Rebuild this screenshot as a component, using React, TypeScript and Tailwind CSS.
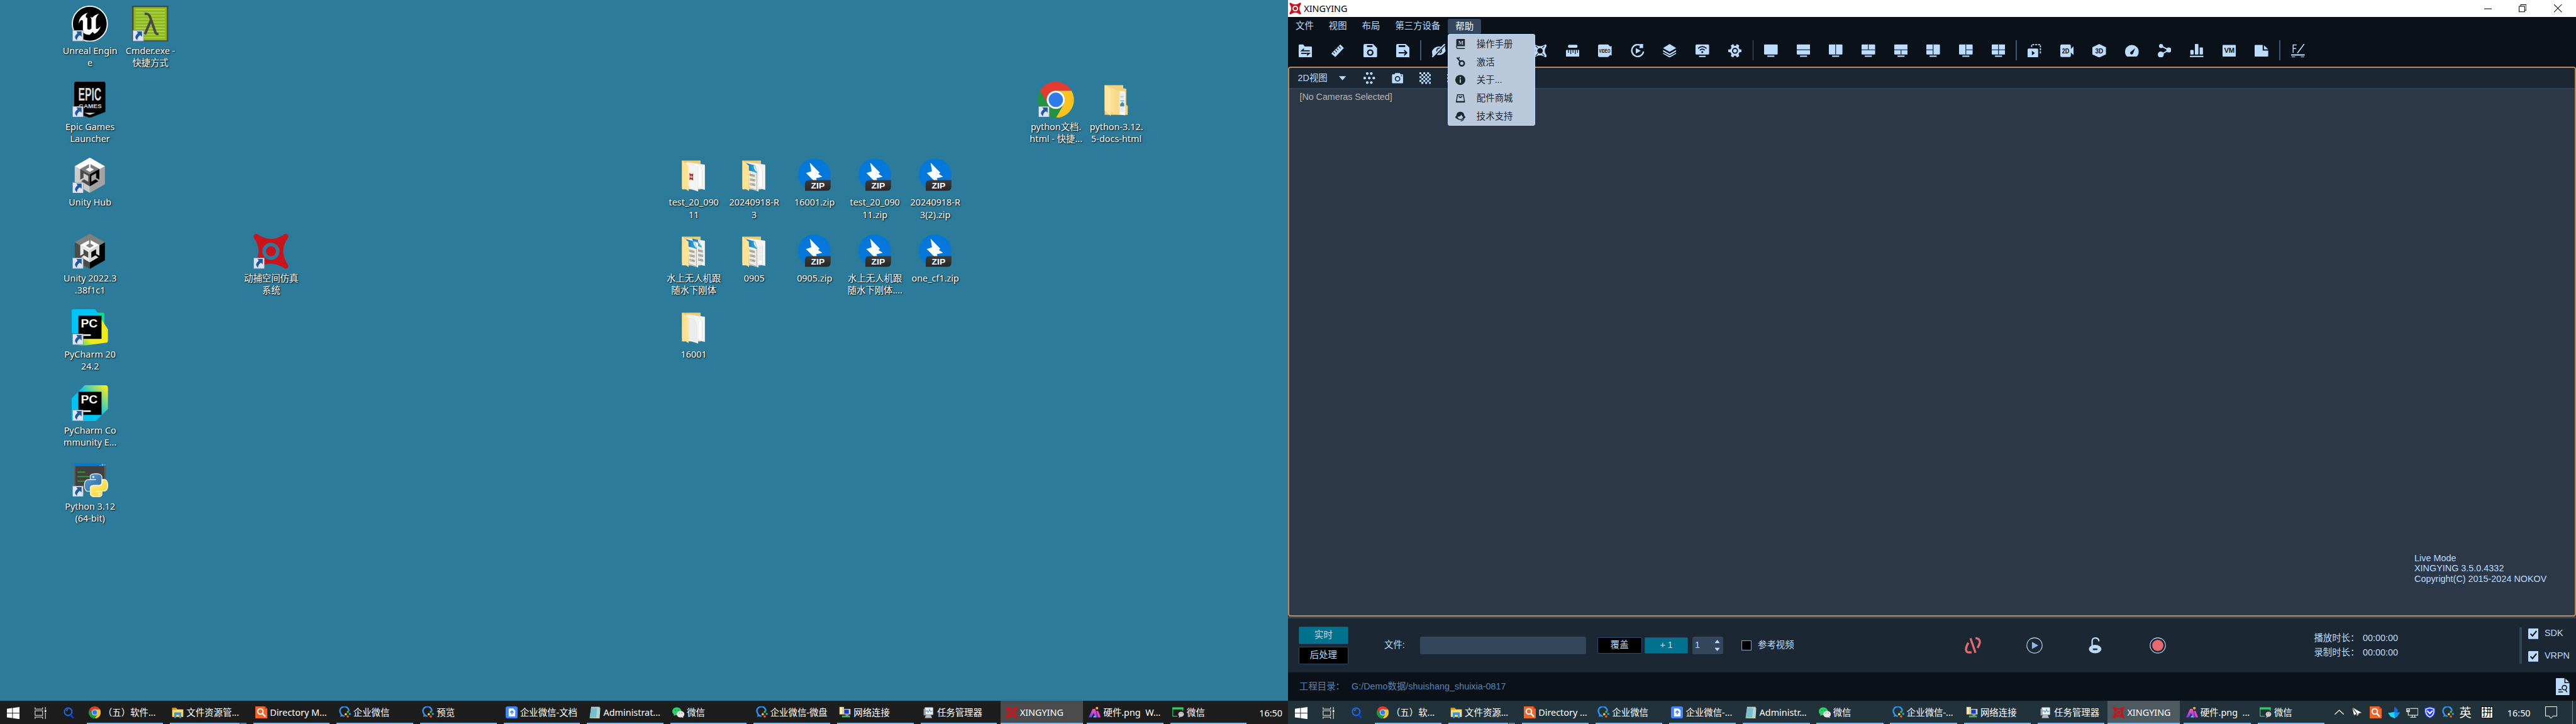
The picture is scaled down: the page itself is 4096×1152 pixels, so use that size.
import React, { type ReactNode } from "react";

const UI = "font-['Noto_Sans','Noto_Sans_CJK_SC',sans-serif]";
const APP = "font-['Liberation_Sans','Noto_Sans_CJK_SC',sans-serif]";

/* ---------- shared drawings ---------- */

function NokovMark({ className }: { className: string }) {
  return (
    <svg viewBox="0 0 72 72" className={className}>
      <path
        fill="#c8151d"
        fillRule="evenodd"
        d="M9 2Q36 21 63 2A5.2 5.2 0 0 1 70 9Q51 36 70 63A5.2 5.2 0 0 1 63 70Q36 51 9 70A5.2 5.2 0 0 1 2 63Q21 36 2 9A5.2 5.2 0 0 1 9 2ZM36 19a17 17 0 1 0 0 34a17 17 0 1 0 0-34Z"
      />
      <circle cx="36" cy="36" r="10" fill="#c8151d" />
    </svg>
  );
}

function ChromeMark({ className }: { className: string }) {
  return (
    <svg viewBox="0 0 72 72" className={className}>
      <path fill="#e33b2e" d="M4.8 18A36 36 0 0 1 67.2 18H36A18 18 0 0 0 20.4 45Z" />
      <path fill="#fcc31e" d="M67.2 18A36 36 0 0 1 36 72L51.6 45A18 18 0 0 0 36 18Z" />
      <path fill="#229342" d="M36 72A36 36 0 0 1 4.8 18L20.4 45A18 18 0 0 0 51.6 45Z" />
      <circle cx="36" cy="36" r="18" fill="#fff" />
      <circle cx="36" cy="36" r="14.3" fill="#2f7bea" />
    </svg>
  );
}

/* ---------- desktop icons (72-unit box) ---------- */

function Unreal() {
  return (
    <svg viewBox="0 0 24 24" className="size-full">
      <circle cx="12" cy="12" r="11.6" fill="#000" stroke="#fff" strokeWidth=".75" />
      <path
        fill="#fff"
        d="M19.13 13.729c-.206.997-1.126 3.557-4.06 4.942l-1.179-1.325-1.988 2a7.338 7.338 0 01-5.804-2.978 2.859 2.859 0 00.65.123c.326.006.678-.114.678-.66v-5.394a.89.89 0 00-1.116-.89c-.92.212-1.656 2.509-1.656 2.509a7.304 7.304 0 012.528-5.597 7.408 7.408 0 013.73-1.721c-1.006.573-1.57 1.507-1.57 2.29 0 1.262.76 1.109.984.923v7.28a1.157 1.157 0 00.148.256 1.075 1.075 0 00.88.445c.76 0 1.747-.868 1.747-.868V9.172c0-.6-.452-1.324-.905-1.572 0 0 .838-.149 1.484.346a5.537 5.537 0 01.387-.425c1.508-1.48 2.929-1.902 4.112-2.112 0 0-2.151 1.69-2.151 3.96 0 1.687.043 5.801.043 5.801.799.771 1.986-.342 3.059-1.441Z"
      />
    </svg>
  );
}

function Cmder() {
  return (
    <svg viewBox="0 0 72 72" className="size-full">
      <rect x="1.5" y="1.5" width="69" height="69" fill="#8cba17" stroke="#4a4a42" strokeWidth="3" />
      {[8, 14.2, 20.4, 26.6, 32.8, 39, 45.2, 51.4, 57.6, 63.8].map((y) => (
        <path key={y} d={`M7 ${y}H65`} stroke="#b3d263" strokeWidth="2" />
      ))}
      <path
        d="M25 16.500c7-1.500 9.500 1.500 11.500 8L46 52c1.500 4.500 3 5 6.500 4M37 30L25.500 57"
        fill="none"
        stroke="#4a4a42"
        strokeWidth="5"
      />
    </svg>
  );
}

function Epic() {
  return (
    <svg viewBox="0 0 72 72" className="size-full">
      <path d="M9 0H63Q67 0 67 4V60L36 72L5 60V4Q5 0 9 0Z" fill="#000" />
      <text transform="translate(13 37) scale(.52 1)" fontSize="38" fontWeight="700" fill="#d9d9d9" fontFamily="Liberation Sans">EPIC</text>
      <text transform="translate(14 52) scale(1.08 1)" fontSize="11.500" fontWeight="700" fill="#d9d9d9" fontFamily="Liberation Sans">GAMES</text>
      <path d="M25 62H47L36 66Z" fill="#d9d9d9" />
    </svg>
  );
}

function Cube({ c }: { c: { top: string; left: string; right: string; it: string; il: string; ir: string } }) {
  return (
    <svg viewBox="0 0 72 72" className="size-full">
      <path fill={c.top} d="M36 1L66 18L36 36L6 18Z" />
      <path fill={c.left} d="M6 18L36 36V71L6 54Z" />
      <path fill={c.right} d="M66 18L36 36V71L66 54Z" />
      <path fill={c.it} d="M36 13L55 23.500L36 34L17 23.500Z" />
      <path fill={c.il} d="M17 23.500L36 34V58L17 47Z" />
      <path fill={c.ir} d="M55 23.500L36 34V58L55 47Z" />
      <path fill={c.top} d="M36 20L44 24.800L36 29.500L28 24.800ZM34.500 11h3v11h-3Z" />
      <path fill={c.left} d="M23.500 32L33 37.500V49L23.500 43.500ZM15 46l9-5 1.500 2.500-8.500 6Z" />
      <path fill={c.right} d="M48.500 32L39 37.500V49L48.500 43.500ZM57 46l-9-5-1.500 2.500 8.500 6Z" />
    </svg>
  );
}
const HUB = { top: "#ffffff", left: "#cbcbcb", right: "#a3a3a3", it: "#7d7d7d", il: "#4b4b4b", ir: "#000000" };
const EDITOR = { top: "#808080", left: "#4b4b4b", right: "#000000", it: "#ffffff", il: "#ececec", ir: "#d9d9d9" };

function PyCharm({ ce = false }: { ce?: boolean }) {
  return (
    <svg viewBox="0 0 72 72" className="size-full">
      <defs>
        <linearGradient id="ceGrad" x1="0.25" y1="0.65" x2="0.95" y2="0.05">
          <stop offset=".35" stopColor="#00c4f4" />
          <stop offset="1" stopColor="#f5ec1c" />
        </linearGradient>
        <linearGradient id="pcBlue" x1="0" y1="0" x2="1" y2="1">
          <stop offset=".5" stopColor="#00c4f8" />
          <stop offset=".8" stopColor="#5bd6a0" />
        </linearGradient>
        <linearGradient id="pcYel" x1="0.1" y1="1" x2="0.6" y2="0.6">
          <stop offset="0" stopColor="#21d789" />
          <stop offset=".6" stopColor="#f0ea1d" />
        </linearGradient>
      </defs>
      {ce ? (
        <path fill="url(#ceGrad)" d="M26 0H67Q72 0 72 5V47L47 72H4Q0 72 0 68V26Z" />
      ) : (
        <>
          <path fill="#0ddc86" d="M46 7H62Q65 7 65 10V40H46Z" />
          <path fill="url(#pcBlue)" d="M4 0H44Q47 0 49 3L60 22V60H20V48H4Q0 48 0 44V4Q0 0 4 0Z" />
          <path fill="url(#pcYel)" d="M59 20L72 40V63Q72 66 69 66.500L28 72H14L8 64L40 50Z" />
        </>
      )}
      <rect x="13.300" y="13" width="46" height="46" fill="#000" />
      <text x="18" y="36.500" fontSize="24" fontWeight="700" textLength="33.500" lengthAdjust="spacingAndGlyphs" fill="#fff" fontFamily="Liberation Sans">PC</text>
      <rect x="19" y="50" width="19" height="3" fill="#fff" />
    </svg>
  );
}

function Python() {
  return (
    <svg viewBox="0 0 72 72" className="size-full">
      <defs>
        <linearGradient id="pyB" x1="0" y1="0" x2="1" y2="1"><stop stopColor="#5a9fd4" /><stop offset="1" stopColor="#306998" /></linearGradient>
        <linearGradient id="pyY" x1="0" y1="0" x2="1" y2="1"><stop stopColor="#fff08a" /><stop offset="1" stopColor="#ffcf2b" /></linearGradient>
      </defs>
      <rect x="5" y="4.500" width="63" height="54" fill="#5b5b5b" />
      <rect x="7.500" y="9" width="57" height="47" fill="#404040" />
      <rect x="5" y="4.500" width="63" height="5" fill="#0878cf" />
      <path d="M55.500 8h2M60 5.800h2.400v2.400H60zM65 5.800l2 2.200m0-2.200l-2 2.200" stroke="#dbeafe" strokeWidth=".7" fill="none" />
      <path d="M11.500 21.500H27M11.500 30.500H36M11.500 39.500H30" stroke="#30a02c" strokeWidth="2.400" />
      <g transform="translate(26 25.500) scale(1.87)" stroke="#fff" strokeWidth="1.500" paintOrder="stroke" strokeLinejoin="round">
        <path fill="url(#pyB)" d="M14.250.18l.9.2.73.26.59.3.45.32.34.34.25.34.16.33.1.3.04.26.02.2-.01.13V8.500l-.05.63-.13.55-.21.46-.26.38-.3.31-.33.25-.35.19-.35.14-.33.1-.3.07-.26.04-.21.02H8.770l-.69.05-.59.14-.5.22-.41.27-.33.32-.27.35-.2.36-.15.37-.1.35-.07.32-.04.27-.02.21v3.060H3.170l-.21-.03-.28-.07-.32-.12-.35-.18-.36-.26-.36-.36-.35-.46-.32-.59-.28-.73-.21-.88-.14-1.050-.05-1.230.06-1.220.16-1.040.24-.87.32-.71.36-.57.4-.44.42-.33.42-.24.4-.16.36-.1.32-.05.24-.01h.16l.06.01h8.160v-.83H6.180l-.01-2.750-.02-.37.05-.34.11-.31.17-.28.25-.26.31-.23.38-.2.44-.18.51-.15.58-.12.64-.1.71-.06.77-.04.84-.02 1.270.05z" />
        <path fill="url(#pyY)" d="M21.100 6.110l.28.06.32.12.35.18.36.27.36.35.35.47.32.59.28.73.21.88.14 1.040.05 1.230-.06 1.230-.16 1.040-.24.86-.32.71-.36.57-.4.45-.42.33-.42.24-.4.16-.36.09-.32.05-.24.02-.16-.01h-8.220v.82h5.840l.01 2.760.02.36-.05.34-.11.31-.17.29-.25.25-.31.24-.38.2-.44.17-.51.15-.58.13-.64.09-.71.07-.77.04-.84.01-1.270-.04-1.070-.14-.9-.2-.73-.25-.59-.3-.45-.33-.34-.34-.25-.34-.16-.33-.1-.3-.04-.25-.02-.2.01-.13v-5.340l.05-.64.13-.54.21-.46.26-.38.3-.32.33-.24.35-.2.35-.14.33-.1.3-.06.26-.04.21-.02.13-.01h5.840l.69-.05.59-.14.5-.21.41-.28.33-.32.27-.35.2-.36.15-.36.1-.35.07-.32.04-.28.02-.21V6.070h2.090l.14.01z" />
      </g>
      <circle cx="43" cy="31" r="2" fill="#fff" />
      <circle cx="55" cy="65" r="2" fill="#fff" />
    </svg>
  );
}

type FolderKind = "nokov" | "code" | "codes" | "codeLines" | "blank";

function Digits({ x, y }: { x: number; y: number }) {
  return (
    <g fontSize="6.500" fontWeight="700" fill="#8d8d85" fontFamily="Liberation Mono" transform={`translate(${x} ${y}) skewY(12)`}>
      <text x="0" y="0" textLength="12.500">00101</text>
      <text x="0" y="9" textLength="12.500">11010</text>
      <text x="0" y="18" textLength="12.500">11100</text>
    </g>
  );
}

function Folder({ kind }: { kind: FolderKind }) {
  const code = kind === "code" || kind === "codes" || kind === "codeLines";
  return (
    <svg viewBox="0 0 72 72" className="size-full">
      <defs>
        <linearGradient id="fF" x1="0" x2="1"><stop stopColor="#fbe096" /><stop offset="1" stopColor="#fde492" /></linearGradient>
        <linearGradient id="fB" x1="0" y1="0" x2="0" y2="1"><stop stopColor="#f0cb6d" /><stop offset="1" stopColor="#fbe29b" /></linearGradient>
        <linearGradient id="fBl" x1="0" x2="1"><stop stopColor="#1273b6" /><stop offset="1" stopColor="#34b1e6" /></linearGradient>
      </defs>
      <path d="M13 7H50V64H13Z" fill="url(#fB)" />
      <path d="M22 10L58.500 15V65L34 60Z" fill="#f4f4f2" />
      <path d="M36 12L46 13.500L53 25V62H38Z" fill={kind === "codes" ? "#eceade" : "#fbfbf9"} stroke="#c9d2d8" strokeWidth=".6" />
      {kind === "codes" && <path d="M33 11L45 13Q44 19 52 26V29L38 22Z" fill="url(#fBl)" />}
      {kind === "codes" && <Digits x={43} y={36} />}
      {kind === "codeLines" && <path d="M46 26h6M46 29h6M46 32h6M46 35h6M46 38h6M46 41h6M46 44h6M46 47h6M46 50h6M46 53h6" stroke="#c3ccd6" strokeWidth=".8" />}
      <path d="M21 11L45 19V68L26 62Z" fill={code ? "#f7f7f5" : "#f3f4f4"} stroke="#d5d5d0" strokeWidth=".5" />
      {code && (
        <>
          <path d="M24 14L38 17L42 29V66L26 61Z" fill="#eeece0" stroke="#6f7276" strokeWidth=".7" />
          <path d="M21 12L36 16Q34 22 42 29V32Q34 28 26 27Z" fill="url(#fBl)" />
          <path d="M36 16L42 29Q36 26 36 16Z" fill="#f4f4f2" />
          <Digits x={26.5} y={37} />
        </>
      )}
      {kind === "blank" && <path d="M26 18L38 20L42 31V64L26 58Z" fill="#ebecee" stroke="#cdd2d6" strokeWidth=".6" strokeDasharray="1 .6" />}
      {kind === "nokov" && (
        <g transform="translate(27.500 31.500) skewY(8)">
          <path d="M0 0Q4 3 8 0Q6.500 7 8 14Q4 11 0 14Q2 7 0 0Z" fill="#d01d22" />
          <circle cx="4" cy="7" r="2.200" fill="#fff" />
          <circle cx="4" cy="7" r="1" fill="#d01d22" />
        </g>
      )}
      <path d="M13 7L26 17V67.500L13 58Z" fill="url(#fF)" />
    </svg>
  );
}

function DocsFolder() {
  return (
    <svg viewBox="0 0 72 72" className="size-full">
      <path d="M13 7H50V13L56 14V46L59 48V66H13Z" fill="#f3d27c" />
      <path d="M43 18L54 20V67L41 65Z" fill="#f7f8fa" />
      <path d="M44 24h8M44 27h8M44 34h8M44 50h8M44 54h8M44 58h8" stroke="#b9c3cf" strokeWidth=".8" />
      <path d="M44 30h7M44 38h8" stroke="#4aa6dd" strokeWidth="1.500" />
      <path d="M44 44l4-4 4 3v6h-8z" fill="#4d8aa0" />
      <path d="M19 10L43 19V66L26 62Z" fill="#f8da87" />
      <path d="M13 7L31 14L33 20V64L26 58Z" fill="#fbe093" />
      <path d="M13 7L25 16V68L13 57Z" fill="#fde69f" />
    </svg>
  );
}

function Zip() {
  return (
    <svg viewBox="0 0 72 72" className="size-full">
      <defs>
        <linearGradient id="zb" x1="0" y1="0" x2="0" y2="1"><stop stopColor="#3c3c3c" /><stop offset="1" stopColor="#262626" /></linearGradient>
      </defs>
      <circle cx="36" cy="35" r="32.300" fill="#0478da" />
      <path fill="#fff" d="M27 11L46.500 31L43.500 33.500L52 39L39.500 42L41 47H34.500L19.500 31.500L30 28Z" />
      <path fill="url(#zb)" d="M25 45.500H68.500V58Q68.500 67 60 67H17.500V53Q17.500 45.500 25 45.500Z" />
      <text x="29.500" y="62" textLength="27" lengthAdjust="spacingAndGlyphs" fontSize="16.500" fontWeight="700" fill="#fff" fontFamily="Liberation Sans">ZIP</text>
    </svg>
  );
}

function ShortcutArrow() {
  return (
    <svg viewBox="0 0 22 22" className="absolute bottom-[0.8px] left-[0.8px] size-[17.6px]">
      <rect x=".5" y=".5" width="21" height="21" fill="#dde4fb" stroke="#8f979c" />
      <path d="M8 2.500H18.500V13L15 10Q9.500 13 9 20Q1 14 10.500 6Z" fill="#215a9c" />
    </svg>
  );
}

const DESKTOP: { col: number; row: number; lines: string[]; icon: ReactNode; link?: boolean }[] = [
  { col: 179, row: 0, lines: ["Unreal Engin", "e"], icon: <Unreal />, link: true },
  { col: 299, row: 0, lines: ["Cmder.exe -", "快捷方式"], icon: <Cmder />, link: true },
  { col: 179, row: 1, lines: ["Epic Games", "Launcher"], icon: <Epic />, link: true },
  { col: 179, row: 2, lines: ["Unity Hub"], icon: <Cube c={HUB} />, link: true },
  { col: 179, row: 3, lines: ["Unity 2022.3", ".38f1c1"], icon: <Cube c={EDITOR} />, link: true },
  { col: 539, row: 3, lines: ["动捕空间仿真", "系统"], icon: <NokovMark className="size-full" />, link: true },
  { col: 179, row: 4, lines: ["PyCharm 20", "24.2"], icon: <PyCharm />, link: true },
  { col: 179, row: 5, lines: ["PyCharm Co", "mmunity E..."], icon: <PyCharm ce />, link: true },
  { col: 179, row: 6, lines: ["Python 3.12", "(64-bit)"], icon: <Python />, link: true },
  { col: 2099, row: 1, lines: ["python文档.", "html - 快捷..."], icon: <ChromeMark className="size-full" />, link: true },
  { col: 2219, row: 1, lines: ["python-3.12.", "5-docs-html"], icon: <DocsFolder /> },
  { col: 1379, row: 2, lines: ["test_20_090", "11"], icon: <Folder kind="nokov" /> },
  { col: 1499, row: 2, lines: ["20240918-R", "3"], icon: <Folder kind="code" /> },
  { col: 1619, row: 2, lines: ["16001.zip"], icon: <Zip /> },
  { col: 1739, row: 2, lines: ["test_20_090", "11.zip"], icon: <Zip /> },
  { col: 1859, row: 2, lines: ["20240918-R", "3(2).zip"], icon: <Zip /> },
  { col: 1379, row: 3, lines: ["水上无人机跟", "随水下刚体"], icon: <Folder kind="codes" /> },
  { col: 1499, row: 3, lines: ["0905"], icon: <Folder kind="codeLines" /> },
  { col: 1619, row: 3, lines: ["0905.zip"], icon: <Zip /> },
  { col: 1739, row: 3, lines: ["水上无人机跟", "随水下刚体...."], icon: <Zip /> },
  { col: 1859, row: 3, lines: ["one_cf1.zip"], icon: <Zip /> },
  { col: 1379, row: 4, lines: ["16001"], icon: <Folder kind="blank" /> },
];

function Desktop() {
  return (
    <div className={`relative flex-1 bg-[#2d7b9a] ${UI}`}>
      {DESKTOP.map((d) => (
        <div
          key={`${d.col}-${d.row}`}
          className="absolute flex w-[96px] flex-col items-center"
          style={{ left: d.col * 0.8 - 48, top: 8.8 + d.row * 120.8 }}
        >
          <div className="relative size-[57.6px]">
            {d.icon}
            {d.link && <ShortcutArrow />}
          </div>
          <div className="mt-[4.400px] flex flex-col items-center text-[14.400px] leading-[19.200px] whitespace-nowrap text-white [text-shadow:1px_1px_2px_rgba(0,0,0,0.95),0_0_2px_rgba(0,0,0,0.5)]">
            {d.lines.map((l) => (
              <span key={l}>{l}</span>
            ))}
          </div>
        </div>
      ))}
    </div>
  );
}

/* ---------- taskbar ---------- */

const I = "size-[19.2px] shrink-0";

function FilesIcon() {
  return (
    <svg viewBox="0 0 24 24" className={I}>
      <path d="M1 3h8l2 3h12v15H1z" fill="#ffd969" /><path d="M1 3h8l1 4H1z" fill="#e09b0d" />
      <path d="M5 12h14v11h-4v-6H9v6H5z" fill="#3a96dd" />
    </svg>
  );
}
function OrangeSearch({ className = I }: { className?: string }) {
  return (
    <svg viewBox="0 0 24 24" className={className}>
      <path d="M0 0h19l5 5v19H0z" fill="#f1652a" /><path d="M19 0l5 5h-5z" fill="#c43d10" />
      <circle cx="10" cy="10" r="5.300" fill="none" stroke="#fff" strokeWidth="2.600" /><path d="M14 14l6 6.500" stroke="#fff" strokeWidth="3" />
    </svg>
  );
}
function WeCom({ className = I }: { className?: string }) {
  return (
    <svg viewBox="0 0 24 24" className={className}>
      <path d="M11 19.500Q5 19 3 13A8.800 8.500 0 1 1 19.500 9.500" fill="none" stroke="#2f93f0" strokeWidth="3" />
      <path d="M2 20.500l2-5 5 4z" fill="#2f93f0" />
      <circle cx="17.500" cy="11" r="2.200" fill="#3fc32c" /><circle cx="21.500" cy="15" r="2.200" fill="#2a9bf2" />
      <circle cx="17.500" cy="20" r="2.300" fill="#fb5a14" /><circle cx="13.500" cy="15.500" r="2.300" fill="#fdc810" />
    </svg>
  );
}
function DocIcon() {
  return (
    <svg viewBox="0 0 24 24" className={I}>
      <rect width="24" height="24" rx="4" fill="#4286f5" /><path d="M6 4h9l4 4v12H6z" fill="#fff" />
      <path d="M12.500 16V9m-3.500 3.500L12.500 9l3.500 3.500" stroke="#3e82f0" strokeWidth="2" fill="none" />
    </svg>
  );
}
function NoteIcon() {
  return (
    <svg viewBox="0 0 24 24" className={I}>
      <path d="M5 2h17l-1 21H2z" fill="#a9d8dc" /><path d="M5 2h12l-2 21H2z" fill="#79bccb" />
      <path d="M4 22.500l17 .5 1.500-20" stroke="#e3d3a6" fill="none" strokeWidth="1.500" /><path d="M5 2h17" stroke="#eee" strokeWidth="2.500" strokeDasharray="1.500 1" />
    </svg>
  );
}
function WeChat() {
  return (
    <svg viewBox="0 0 24 24" className={I}>
      <path d="M9 2C4 2 0 5.500 0 10c0 2.500 1.300 4.600 3.300 6L2.500 19l3.500-1.800c1 .3 2 .4 3 .4 5 0 9-3.400 9-7.700S14 2 9 2z" fill="#2fd069" />
      <path d="M16.500 9c-4.200 0-7.500 2.900-7.500 6.500S12.300 22 16.500 22c.9 0 1.700-.1 2.500-.4l3 1.400-.7-2.600c1.700-1.200 2.700-2.900 2.700-4.900C24 11.900 20.700 9 16.500 9z" fill="#e6e6e6" />
      <path d="M6 7.500h.1M12 7.500h.1" stroke="#0c6b30" strokeWidth="2" strokeLinecap="round" /><path d="M14 13.500h.1M19 13.500h.1" stroke="#777" strokeWidth="1.800" strokeLinecap="round" />
    </svg>
  );
}
function NetIcon() {
  return (
    <svg viewBox="0 0 24 24" className={I}>
      <path d="M1 1h9v15H1z" fill="#e9d27c" /><path d="M2 2h4v13H2z" fill="#f8ecb4" />
      <path d="M9 5h14v11H9z" fill="#c9ccd4" /><path d="M10.500 6.500h9v8h-9z" fill="#1738c9" />
      <path d="M6 20h16" stroke="#3fb55a" strokeWidth="3.500" /><path d="M13 16h6v3h-6z" fill="#8b93a0" />
    </svg>
  );
}
function TaskMgr() {
  return (
    <svg viewBox="0 0 24 24" className={I}>
      <rect x="4" y="2" width="17" height="15" rx="1.500" fill="#d5d9dc" /><rect x="6" y="4" width="13" height="11" fill="#f5fbff" />
      <path d="M6 10l3-2 2 4 3-6 2 5 3-2" stroke="#3b8fd1" fill="none" strokeWidth="1.300" />
      <path d="M7 17h9l3 6H4z" fill="#b6babd" /><rect x="2" y="5" width="4" height="13" fill="#9aa0a4" />
    </svg>
  );
}
function AiIcon() {
  return (
    <svg viewBox="0 0 24 24" className={I}>
      <defs><linearGradient id="aig" x1="0" y1="0" x2="0" y2="1"><stop stopColor="#ff5cae" /><stop offset="1" stopColor="#6a3cf5" /></linearGradient></defs>
      <path d="M8 5h5l5 17h-5l-3-9-4 9H0z" fill="url(#aig)" /><path d="M15 9h4l5 13h-5z" fill="#ec3fd4" /><circle cx="16.500" cy="3.500" r="2.700" fill="#ffa14a" />
      <path d="M10 19l4-1 1 4h-6z" fill="#41c8f5" />
    </svg>
  );
}
function MiniWin() {
  return (
    <svg viewBox="0 0 24 24" className={I}>
      <path d="M10 19.500H1V3H21V9" fill="none" stroke="#2fd069" strokeWidth="1.500" /><path d="M0 2h22v4H0z" fill="#2fd069" />
      <ellipse cx="17.500" cy="15.500" rx="5.500" ry="5" fill="#c9c9c9" /><path d="M14 18l-1 5 4-3z" fill="#c9c9c9" />
      <path d="M15.500 14h.1M19.500 14h.1" stroke="#777" strokeWidth="1.500" strokeLinecap="round" />
    </svg>
  );
}

type Task = { icon: ReactNode; l: string; r?: string; active?: boolean; stack?: boolean };
const TASKS: Task[] = [
  { icon: <ChromeMark className={I} />, l: "（五）软件...", r: "（五）软..." },
  { icon: <FilesIcon />, l: "文件资源管...", r: "文件资源...", stack: true },
  { icon: <OrangeSearch />, l: "Directory M...", r: "Directory ..." },
  { icon: <WeCom />, l: "企业微信", r: "企业微信" },
  { icon: <WeCom />, l: "预览" },
  { icon: <DocIcon />, l: "企业微信-文档", r: "企业微信-..." },
  { icon: <NoteIcon />, l: "Administrat...", r: "Administr..." },
  { icon: <WeChat />, l: "微信", r: "微信" },
  { icon: <WeCom />, l: "企业微信-微盘", r: "企业微信-..." },
  { icon: <NetIcon />, l: "网络连接", r: "网络连接" },
  { icon: <TaskMgr />, l: "任务管理器", r: "任务管理器" },
  { icon: <NokovMark className={I} />, l: "XINGYING", r: "XINGYING", active: true },
  { icon: <AiIcon />, l: "硬件.png  W...", r: "硬件.png  ..." },
  { icon: <MiniWin />, l: "微信", r: "微信" },
];

function TaskButton({ t, label, right }: { t: Task; label: string; right: boolean }) {
  const box = right
    ? t.active ? "w-[115.200px] -ml-[5.600px] mr-[6px] bg-[#4d5a60]" : "w-[106.400px] mr-[10.740px]"
    : t.active ? "w-[131.200px] -ml-[5.600px] mr-[6.400px] bg-[#4b4b4b]" : "w-[121.600px] mr-[11px]";
  return (
    <div className={`flex h-full shrink-0 flex-col ${box}`}>
      <div className={`flex flex-1 items-center overflow-hidden pt-[2px] ${t.active ? "pl-[8px]" : "pl-[3.200px]"}`}>
        {t.icon}
        <span className="ml-[4px] whitespace-pre">{label}</span>
      </div>
      <div className="flex h-[2.400px] bg-[#76b9ed]">
        {t.stack && <div className="ml-auto w-[11px] border-l border-[#22323a] bg-[#5583a8]" />}
      </div>
    </div>
  );
}

function StartCluster() {
  return (
    <div className="flex h-full w-[137.600px] shrink-0 items-center pt-px pl-[11.200px]">
      <svg viewBox="0 0 25 24" className="h-[19.200px] w-[20px]">
        <path fill="#fff" d="M0 3.400L10.500 2V11.500H0ZM11.700 1.800L25 0V11.500H11.700ZM0 12.700H10.500V22L0 20.600ZM11.700 12.700H25V24L11.700 22.200Z" />
      </svg>
      <svg viewBox="0 0 24 24" className="ml-[24px] size-[19.200px]" fill="none" stroke="#f1f1f1" strokeWidth="1.300">
        <path d="M1 .5V4H16V.5M1 23.500V20H16V23.500M1 7.500H16V16.500H1ZM21.500 0V5M21.500 11V24" />
        <rect x="20.500" y="6.500" width="2" height="3" fill="#f1f1f1" />
      </svg>
      <svg viewBox="0 0 24 24" className="ml-[26px] size-[19.200px]" fill="none">
        <circle cx="10.500" cy="9.500" r="7.500" stroke="#1668f5" strokeWidth="2.600" /><path d="M15.500 15.500L21 22" stroke="#0b3ee0" strokeWidth="3.600" />
        <path d="M7 8a4 4 0 0 1 3.500-3" stroke="#5aa3ff" strokeWidth="1.300" />
      </svg>
    </div>
  );
}

function Tray() {
  const s = "size-[19.2px] shrink-0";
  return (
    <div className="ml-auto flex h-full shrink-0 items-center">
      <svg viewBox="0 0 24 24" className={`${s} mr-[8.800px]`} fill="none" stroke="#fff" strokeWidth="1.500"><path d="M3 16L12 7.500L21 16" /></svg>
      <svg viewBox="0 0 24 24" className={`${s} mr-[11px]`}><path d="M2 1L23 13L16 14L13 22L10 16L6 18Z" fill="#fff" stroke="#111" strokeWidth=".8" /><path d="M2 1L12 15L13 22" stroke="#111" strokeWidth="1.300" fill="none" /></svg>
      <OrangeSearch className={`${s} mr-[9.600px]`} />
      <svg viewBox="0 0 24 24" className={`${s} mr-[9.600px]`}><path d="M13 0L20 7L17 15L12 12Z" fill="#0a6cf2" /><path d="M0 13L13 11L14 24L5 20Z" fill="#18d8f5" /><path d="M12 12L24 12L18 21L14 23Z" fill="#1890ee" /></svg>
      <svg viewBox="0 0 24 24" className={`${s} mr-[9.600px]`} fill="none" stroke="#fff" strokeWidth="1.300"><path d="M8 4H23.500V17.500H4V11M12 17.500V21M17 17.500V21M8 21.500H20M1 4.500H6.500V10.500H1ZM3.500 7.500V10M1 7.500H6.500" /></svg>
      <svg viewBox="0 0 24 24" className={`${s} mr-[9.600px]`}><path d="M12 0L23 3.500V11Q22 20 12 24Q2 20 1 11V3.500Z" fill="#2440e8" /><path d="M12 3L20 5.500V11Q19 18 12 21Q5 18 4 11V5.500Z" fill="none" stroke="#fff" strokeWidth="1.800" /><path d="M6.500 8.500L12 14L17.500 8.500" fill="none" stroke="#fff" strokeWidth="2.600" /></svg>
      <WeCom className={`${s} mr-[8px]`} />
      <span className="text-[19.200px] leading-none">英</span>
      <span className="ml-[15.600px] flex size-[19.200px] items-center justify-center border border-black bg-white text-[16.500px] leading-none text-black">拼</span>
      <span className="ml-[22.400px] w-[38px] pt-[2px]">16:50</span>
      <svg viewBox="0 0 24 24" className={`${s} ml-[22px]`} fill="none" stroke="#fff" strokeWidth="1.300"><path d="M.7 .7H23.300V19H16L11.500 23.500L7.500 19H.7Z" /></svg>
      <div className="ml-[24px] h-full w-px bg-[#7f8b90]" />
      <div className="w-[5px]" />
    </div>
  );
}

function Taskbar({ right = false }: { right?: boolean }) {
  return (
    <div className={`flex h-[36.800px] shrink-0 items-center text-[14.400px] text-white ${UI} ${right ? "bg-[#22323a]" : "bg-[#1d1d1d]"}`}>
      <StartCluster />
      {TASKS.filter((t) => !right || t.r).map((t, i) => (
        <TaskButton key={i} t={t} label={right ? t.r! : t.l} right={right} />
      ))}
      {right ? <Tray /> : <span className="mr-[9px] ml-auto pt-[2px]">16:50</span>}
    </div>
  );
}

/* ---------- motion-capture application ---------- */

const L = "#bcdcff";
const D = "#0a1118";

/* Toolbar glyphs share a 27-unit box. */
function G({ children }: { children: ReactNode }) {
  return <svg viewBox="0 0 27 27" className="size-[21.600px]" fill={L}>{children}</svg>;
}
function Monitor({ d }: { d?: string }) {
  return (
    <G>
      <rect x="0" y="1" width="27" height="20" rx="1.500" />
      <rect x="6.500" y="23" width="14" height="2.600" />
      {d && <path d={d} stroke={D} strokeWidth="1.400" />}
    </G>
  );
}
const star = "M1 1.500Q3 0 5 2Q13.500 7 22 2Q24 0 26 1.500Q27.500 3.500 25.500 6Q20 13.500 25.500 21Q27.500 24 26 25.500Q24 27 22 25Q13.500 20 5 25Q3 27 1 25.500Q-.5 24 1.500 21Q7 13.500 1.500 6Q-.5 3.500 1 1.500Z";

const TOOLS: (ReactNode | "sep" | "gap")[] = [
  <G><path d="M1.500 1H9L12 5H24Q27 5 27 8V24Q27 26.500 24.500 26.500H2.500Q0 26.500 0 24V3Q0 1 1.500 1Z" /><path d="M22 13.500H6L10.500 9.500M5 18.500H21L16.500 22.500" stroke={D} strokeWidth="2.200" fill="none" /></G>,
  <G><path d="M19 1L26 8L9 26L1 19Z" /><path d="M16 5l4 4M12 9l3 3M8.500 12.500l4 4M5 16.500l3 3" stroke={D} strokeWidth="1.500" /></G>,
  <G><path d="M3 0H19L27 8V24Q27 27 24 27H3Q0 27 0 24V3Q0 0 3 0Z" /><path d="M7 2.500H18V6H7Z" fill={D} /><circle cx="13.500" cy="17" r="5" fill="none" stroke={D} strokeWidth="3" /></G>,
  <G><path d="M3 0H19L27 8V24Q27 27 24 27H3Q0 27 0 24V3Q0 0 3 0Z" /><path d="M5 2.500H18V6H5Z" fill={D} /><path d="M5 17.500H21M16 12.500L21 17.500L16 22.500" fill="none" stroke={D} strokeWidth="2.400" /></G>,
  "sep",
  <G><path d="M0 14Q5 5 13.500 5Q18 5 21 7.500L26 0V9Q27 13 27 14Q22 22 13.500 22Q8 22 5 20L1 26Z" /><path d="M18 9Q14 7 10.500 10Q8 14 11 17M15 18Q20 16 19 12" stroke={D} strokeWidth="2" fill="none" /><path d="M1.500 27L26 .5" stroke={D} strokeWidth="4.500" /><path d="M0 26.500L25.500 0" stroke={L} strokeWidth="2.600" /></G>,
  "sep", "gap", "gap",
  <G><path d={star} /><path d="M9 8L5 3.500M18 8L22 3.500M9 19L5 23.500M18 19L22 23.500" stroke={D} strokeWidth="1.500" /><circle cx="13.500" cy="13.500" r="5.500" fill={D} /></G>,
  <G><rect x="4" y="1.500" width="19" height="6" rx="2.500" /><path d="M1 12H26Q27 12 27 13V25H0V13Q0 12 1 12Z" /><path d="M5 12V17.500M9.500 12V20M14 12V17.500M18.500 12V20M23 12V17.500" stroke={D} strokeWidth="1.600" /></G>,
  <G><path d="M3 1H20L24 5L27 4V23L24 22L20 26H3Q0 26 0 23V4Q0 1 3 1Z" /><text transform="translate(2 17.500) scale(.68 1)" fontSize="10.500" fontWeight="700" fill={D} fontFamily="Liberation Sans">VIDEO</text></G>,
  <G><path d="M22 4.500A11.800 11.800 0 1 0 25.500 15" fill="none" stroke={L} strokeWidth="3" /><path d="M19 0L24.500 0V8H17Z" /><path d="M10 8L20 13.500L10 19Z" /></G>,
  <G><path d="M13.500 0L26.500 8L13.500 15.500L.5 8Z" /><path d="M.5 12L13.500 19.500L26.500 12V15L13.500 22.500L.5 15ZM.5 17.500L13.500 24L26.500 17.500V19.500L13.500 27L.5 19.500Z" /></G>,
  <G><rect x="0" y="1" width="27" height="20" rx="2" /><rect x="7" y="23.500" width="13" height="2.500" /><path d="M5 9Q13.500 1.500 22 9M8.500 12.500Q13.500 8 18.500 12.500" stroke={D} strokeWidth="2" fill="none" /><circle cx="13.500" cy="16" r="2" fill={D} /></G>,
  <G><path fillRule="evenodd" d="M10 0L11.500 3.500H15.500L17 0L22 3L20.500 7L22.500 10.500L27 11V16L22.500 16.500L20.500 20L22 24L17 27L15.500 23.500H11.500L10 27L5 24L6.500 20L4.500 16.500L0 16V11L4.500 10.500L6.500 7L5 3ZM13.500 7.500A6 6 0 1 0 13.500 19.500A6 6 0 1 0 13.500 7.500Z" /><circle cx="13.500" cy="13.500" r="3.600" /></G>,
  "sep",
  <Monitor />,
  <Monitor d="M0 11.500H27" />,
  <Monitor d="M13.500 1V21" />,
  <Monitor d="M0 11.500H27M13.500 1V11.500" />,
  <Monitor d="M0 11.500H27M13.500 11.500V21" />,
  <Monitor d="M13.500 1V21M0 11.500H13.500" />,
  <Monitor d="M13.500 1V21M13.500 11.500H27" />,
  <Monitor d="M13.500 1V21M0 11.500H27" />,
  "sep",
  <G><rect x="0" y="9" width="21" height="18" rx="2" /><path d="M8 6V1.500H25.500V18H23" fill="none" stroke={L} strokeWidth="2.200" strokeDasharray="4 1.800" /><path d="M8.500 13.500L14.500 18L8.500 22.500Z" fill={D} /></G>,
  <G><path d="M3 1H18Q21 1 21 4V10L27 4V23L21 17V23Q21 26 18 26H3Q0 26 0 23V4Q0 1 3 1Z" /><text x="3.500" y="18.500" fontSize="14" fontWeight="700" textLength="14.500" lengthAdjust="spacingAndGlyphs" fill={D} fontFamily="Liberation Sans">2D</text></G>,
  <G><path d="M13.500 0L27 6.500V20.500L13.500 27L0 20.500V6.500Z" /><text x="5.500" y="18.500" fontSize="14" fontWeight="700" textLength="16" lengthAdjust="spacingAndGlyphs" fill={D} fontFamily="Liberation Sans">3D</text></G>,
  <G><path d="M4 25Q0 22 0 15A13.500 13 0 0 1 27 15Q27 22 23 25Z" /><path d="M20 8.500L16 18.500A3 3 0 1 1 12 15Z" fill={D} /></G>,
  <G><circle cx="6.500" cy="4" r="4" /><circle cx="22" cy="12" r="5" /><circle cx="6" cy="21" r="6" /><path d="M6.500 4L22 12L6 21" fill="none" stroke={L} strokeWidth="2.500" /></G>,
  <G><rect x="1" y="12" width="6.500" height="9" rx="1" /><rect x="10" y="0" width="7" height="21" rx="1" /><rect x="19.500" y="7" width="6.500" height="14" rx="1" /><rect x="0" y="23.500" width="27" height="2.500" /></G>,
  <G><rect y="2" width="27" height="23" rx="1.500" /><text x="3" y="18" fontSize="13.500" fontWeight="700" textLength="21" lengthAdjust="spacingAndGlyphs" fill={D} fontFamily="Liberation Sans">VM</text></G>,
  <G><path d="M1.500 2H16V13H27V23.500Q27 25 25.500 25H1.500Q0 25 0 23.500V3.500Q0 2 1.500 2Z" /><path d="M18.500 2.500L27 10.500H18.500Z" /></G>,
  "sep",
  <G><path d="M4 17.500V1.800H11M4 9H10" fill="none" stroke={L} strokeWidth="1.800" /><path d="M12.500 18L26 0" stroke={L} strokeWidth="2" /><rect y="20.500" width="27" height="2.600" /><path d="M1 25H8V27H2ZM19 25H26V27H20Z" /></G>,
];

function HelpMenu() {
  const items: { t: string; i: ReactNode }[] = [
    { t: "操作手册", i: <><path d="M4 0H19V14.500H2V2Q2 0 4 0Z" fill="#1b2733" /><path d="M2.800 13V17Q2.800 19 5 19H19" fill="none" stroke="#1b2733" strokeWidth="1.800" /><text x="5.800" y="11.500" fontSize="11" fontWeight="700" fill="#b9c9db" fontFamily="Liberation Serif">M</text></> },
    { t: "激活", i: <g stroke="#1b2733" fill="none"><circle cx="13" cy="13.500" r="4.800" strokeWidth="3.200" /><path d="M10 10L3 2M8.500 1.500L4.500 5.500" strokeWidth="2.400" /></g> },
    { t: "关于...", i: <><circle cx="10" cy="10.250" r="10" fill="#1b2733" /><path d="M10 4.500v2.600M10 9v7" stroke="#b9c9db" strokeWidth="2.400" /></> },
    { t: "配件商城", i: <g stroke="#1b2733" fill="none" strokeWidth="1.800"><path d="M4.500 3.500H16L18.500 17.500H2Z" /><path d="M2 17.500H18.500" strokeWidth="3" /><path d="M7 6.500Q10.200 11 13.500 6.500" strokeWidth="2.200" /></g> },
    { t: "技术支持", i: <><path d="M2 9Q3 1 10 1Q17 1 18 9Q20 10 20 12Q20 14 17.500 14.500Q14 18 10 17.500Q5 17.500 2.500 14.500Q0 14 0 12Q0 10 2 9Z" fill="#1b2733" /><path d="M4.500 11Q10 11 12 6.500Q13 10 15.500 11Q15 15.500 10 16Q5 15 4.500 11Z" fill="#b9c9db" /><path d="M17 15Q15 19.500 10.500 19.500" stroke="#1b2733" strokeWidth="1.500" fill="none" /></> },
  ];
  return (
    <div className="absolute top-[24.800px] left-0 z-10 flex h-[146px] w-[138.800px] flex-col rounded-[3px] border-[1.600px] border-[#bcdcff] bg-[#b9c9db]">
      {items.map((m) => (
        <div key={m.t} className="flex h-[28.800px] items-center pl-[10.800px] text-[#1b2733]">
          <svg viewBox="0 0 20.500 20.500" className="size-[16.400px]">{m.i}</svg>
          <span className="ml-[17.300px] whitespace-nowrap">{m.t}</span>
        </div>
      ))}
    </div>
  );
}

function Check({ label }: { label: string }) {
  return (
    <div className="flex h-[16.800px] items-center">
      <svg viewBox="0 0 21 21" className="size-[16.800px]"><rect width="21" height="21" rx="1.500" fill={L} /><path d="M4.500 10.500L8.500 15L16.500 5" fill="none" stroke={D} strokeWidth="2.600" /></svg>
      <span className="ml-[9.600px]">{label}</span>
    </div>
  );
}

function ControlPanel() {
  return (
    <div className="flex h-[86.400px] shrink-0 items-center bg-[#1b2834]">
      <div className="ml-[16.800px] flex w-[79.200px] flex-col gap-[3.600px] pb-[1px]">
        <div className="flex h-[28.400px] items-center justify-center rounded-[2px] border border-[#2d4a6c] bg-[#00728d]">实时</div>
        <div className="flex h-[28.400px] items-center justify-center rounded-[2px] border border-[#2d4a6c] bg-black">后处理</div>
      </div>
      <span className="ml-[57px] w-[57px] whitespace-nowrap">文件:</span>
      <div className="h-[27.600px] w-[263.700px] rounded-[3px] bg-[#34465b]" />
      <div className="ml-[18px] flex h-[25.600px] w-[71.200px] items-center justify-center rounded-[2px] border border-[#2d4a6c] bg-black">覆盖</div>
      <div className="ml-[4px] flex h-[26px] w-[69.600px] items-center justify-center rounded-[2px] border border-[#2d4a6c] bg-[#00728d]">+ 1</div>
      <div className="ml-[6.600px] flex h-[27.600px] w-[49px] items-center justify-between rounded-[3px] bg-[#34465b] pr-[5px] pl-[4px]">
        <span>1</span>
        <svg viewBox="0 0 10 22" className="h-[18px] w-[9px]" fill={L}><path d="M5 0L10 6.500H0ZM5 22L0 15.500H10Z" /></svg>
      </div>
      <div className="ml-[29px] size-[16.400px] border border-[#8ea3bd] bg-black" />
      <span className="ml-[9.600px] w-[329px] whitespace-nowrap">参考视频</span>
      <svg viewBox="0 0 33 32" className="h-[25.600px] w-[26.400px]" fill="none" stroke="#e86a70" strokeWidth="4.200">
        <path d="M7.500 11Q3 17 2.500 24Q3 30 7.500 30H11.500V28M11.500 2L21.500 31M21.500 2H24Q31 4 30 11Q29 15 25.500 21" />
      </svg>
      <svg viewBox="0 0 32 32" className="ml-[72px] size-[26px]"><circle cx="16" cy="16" r="15" fill="none" stroke={L} strokeWidth="1.400" /><path d="M11 9L23.500 16L11 23Z" fill="#8fb6e0" /></svg>
      <svg viewBox="0 0 26 32" className="ml-[73px] h-[25.600px] w-[20.800px]"><ellipse cx="13" cy="23.500" rx="12.500" ry="8.500" fill={L} /><path d="M7 18V8Q7 1.500 13.500 1.500Q20 1.500 20.500 8" fill="none" stroke={L} strokeWidth="2.800" /><path d="M8.500 22.300H17.500V25.500H8.500Z" fill="#1b2834" /></svg>
      <svg viewBox="0 0 32 32" className="ml-[75.500px] size-[26px]"><circle cx="16" cy="16" r="15" fill="none" stroke={L} strokeWidth="1.400" /><circle cx="16" cy="16" r="11" fill="#e86a70" /></svg>
      <div className="ml-auto flex flex-col gap-[4px] leading-[19.200px]">
        <div className="flex whitespace-nowrap"><span className="w-[77.600px]">播放时长：</span><span>00:00:00</span></div>
        <div className="flex whitespace-nowrap"><span className="w-[77.600px]">录制时长：</span><span>00:00:00</span></div>
      </div>
      <div className="ml-[193px] h-[57.600px] w-[4px] bg-[#34465b]" />
      <div className="ml-[9.500px] flex w-[76.500px] flex-col gap-[19.200px] pb-[2px]">
        <Check label="SDK" />
        <Check label="VRPN" />
      </div>
    </div>
  );
}

function XingyingWindow() {
  return (
    <div className={`flex flex-1 flex-col bg-[#0a1118] text-[14.400px] text-[#bcdcff] ${APP}`}>
      <div className={`flex h-[27.200px] shrink-0 items-center bg-white text-black ${UI}`}>
        <NokovMark className="ml-[1.600px] size-[19.200px]" />
        <span className="ml-[4.500px]">XINGYING</span>
        <svg viewBox="0 0 16 16" className="ml-auto size-[12px]" stroke="#000"><path d="M0 8H16" strokeWidth="1.400" /></svg>
        <svg viewBox="0 0 16 16" className="ml-[43px] size-[12.400px]" fill="none" stroke="#000" strokeWidth="1.300"><path d="M.7 4H12V15.300H.7ZM4 4V.7H15.300V12H12" /></svg>
        <svg viewBox="0 0 16 16" className="mr-[22.500px] ml-[44px] size-[12.400px]" stroke="#000" strokeWidth="1.300"><path d="M0 0L16 16M16 0L0 16" /></svg>
      </div>

      <div className="flex h-[30.400px] shrink-0 items-start pt-[2.400px]">
        {["文件", "视图", "布局", "第三方设备"].map((m) => (
          <div key={m} className="flex h-[24px] items-center px-[12px] whitespace-nowrap">{m}</div>
        ))}
        <div className="relative h-[24px] rounded-[3px] bg-[#34465b] px-[12px] leading-[24px] whitespace-nowrap text-white">
          帮助
          <HelpMenu />
        </div>
      </div>

      <div className="flex h-[48.800px] shrink-0 items-center pb-[3px] pl-[1.700px]">
        {TOOLS.map((t, i) =>
          t === "sep" ? (
            <div key={i} className="flex h-[32px] w-[5.920px] justify-center"><div className="w-[1.400px] bg-[#3a5878]" /></div>
          ) : (
            <div key={i} className="flex w-[51.640px] justify-center">{t === "gap" ? null : t}</div>
          )
        )}
      </div>

      <div className="flex flex-1 flex-col rounded-[4px] border-[2px] border-[#b58a5c] bg-[#2c3847]">
        <div className="flex h-[34px] shrink-0 items-center rounded-t-[3px] border-b-2 border-[#2f4252] bg-[#1b2834] pl-[13.500px]">
          <span className="w-[48px]">2D视图</span>
          <svg viewBox="0 0 14 8" className="ml-[17px] h-[7px] w-[11.200px]" fill={L}><path d="M0 0H14L7 8Z" /></svg>
          <svg viewBox="0 0 23 23" className="ml-[28.600px] size-[18.400px]" fill={L}>
            {[[7.500, 2.500], [15.500, 2.500], [2.500, 11.500], [11.500, 11.500], [20.500, 11.500], [7.500, 20.500], [15.500, 20.500]].map(([x, y]) => (
              <circle key={`${x}${y}`} cx={x} cy={y} r="2.700" />
            ))}
          </svg>
          <svg viewBox="0 0 23 23" className="ml-[26px] size-[18.400px]" fill={L}><path fillRule="evenodd" d="M7 1.500H16L17.500 4H21Q22.500 4 22.500 5.500V20.500Q22.500 22 21 22H2Q.5 22 .5 20.500V5.500Q.5 4 2 4H5.500ZM11.500 7.500A5.500 5.500 0 1 0 11.500 18.500A5.500 5.500 0 1 0 11.500 7.500Z" /><circle cx="11.500" cy="13" r="3.300" /><circle cx="19.500" cy="7" r="1.200" fill="#1b2834" /></svg>
          <svg viewBox="0 0 6 6" className="ml-[26px] size-[18.400px]" fill={L}><path d="M0 0h1v1H0zM2 0h1v1H2zM4 0h1v1H4zM1 1h1v1H1zM3 1h1v1H3zM5 1h1v1H5zM0 2h1v1H0zM2 2h1v1H2zM4 2h1v1H4zM1 3h1v1H1zM3 3h1v1H3zM5 3h1v1H5zM0 4h1v1H0zM2 4h1v1H2zM4 4h1v1H4zM1 5h1v1H1zM3 5h1v1H3zM5 5h1v1H5z" /></svg>
          <svg viewBox="0 0 23 23" className="ml-[26px] size-[18.400px]" stroke={L} strokeWidth="2.500"><path d="M0 5H23M0 11.500H23M0 18H23" /></svg>
        </div>
        <span className="mt-[2px] ml-[16.500px] tracking-[-0.08px] text-[#b4b4b4]">[No Cameras Selected]</span>
        <div className="mt-auto mr-[44px] mb-[49px] ml-auto w-[211px] leading-[16.800px] whitespace-nowrap">
          <div>Live Mode</div>
          <div>XINGYING 3.5.0.4332</div>
          <div>Copyright(C) 2015-2024 NOKOV</div>
        </div>
      </div>
      <div className="h-[3px] shrink-0 bg-[#34465b]" />

      <ControlPanel />

      <div className="flex h-[44.800px] shrink-0 items-center pr-[10.500px] pl-[18px] text-[#5584b8]">
        <span className="w-[83px] whitespace-nowrap">工程目录：</span>
        <span>G:/Demo数据/shuishang_shuixia-0817</span>
        <svg viewBox="0 0 27 34" className="ml-auto h-[27.200px] w-[21.600px]"><path d="M1 0H17V10H27V33Q27 34 26 34H1Q0 34 0 33V1Q0 0 1 0ZM19 1L26.500 8H19Z" fill={L} /><g stroke={D} strokeWidth="2" fill="none"><circle cx="17" cy="19" r="4.500" /><path d="M19 23L22 28M5 23H11.500M5 27.500H14" /></g></svg>
      </div>
    </div>
  );
}

export default function App() {
  return (
    <div className="flex h-[1152px] w-[4096px] overflow-hidden">
      <div className="flex w-[2048px] shrink-0 flex-col">
        <Desktop />
        <Taskbar />
      </div>
      <div className="flex w-[2048px] shrink-0 flex-col">
        <XingyingWindow />
        <Taskbar right />
      </div>
    </div>
  );
}
